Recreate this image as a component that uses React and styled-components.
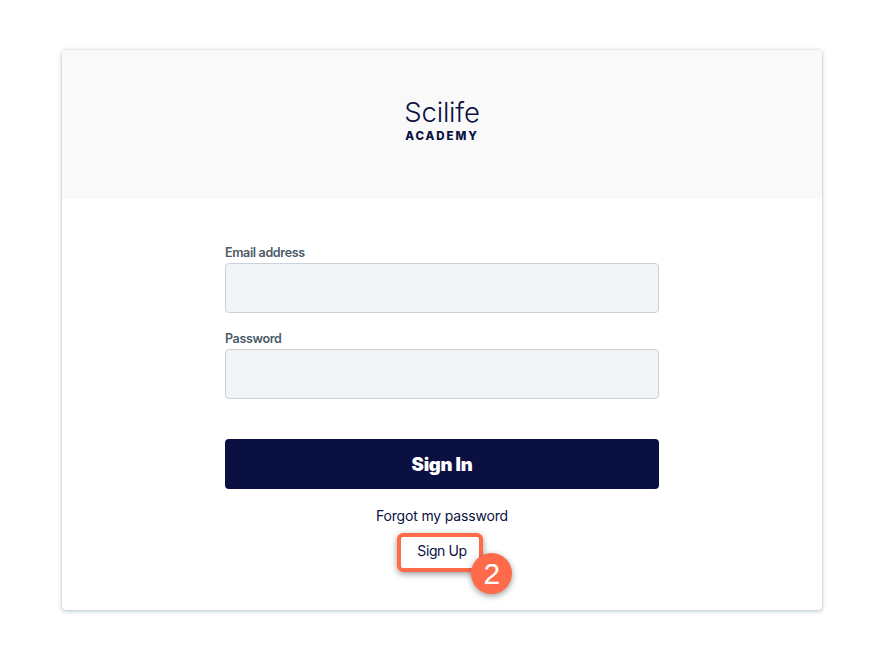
import React from "react";
import styled, { createGlobalStyle } from "styled-components";

const Global = createGlobalStyle`
  html, body { margin: 0; padding: 0; background: #fff; }
  body { font-family: "Inter", "Liberation Sans", sans-serif; }
`;

const Page = styled.div`
  width: 889px;
  height: 669px;
  padding: 50px 67px 0 62px;
  box-sizing: border-box;
`;

const Card = styled.main`
  height: 560px;
  background: #fff;
  border-radius: 4px;
  box-shadow: 0 1px 4px rgba(120, 150, 160, 0.6), 0 0 2px rgba(120, 150, 160, 0.15);
`;

const Header = styled.header`
  height: 149px;
  background: #f9f9f9;
  border-radius: 4px 4px 0 0;
  display: flex;
  flex-direction: column;
  align-items: center;
  padding-top: 47px;
  box-sizing: border-box;
  color: #0a1142;
`;

const LogoName = styled.div`
  font-size: 27.5px;
  line-height: 31px;
  font-weight: 300;
  letter-spacing: -0.2px;
`;

const LogoSub = styled.div`
  font-size: 11.5px;
  line-height: 14px;
  font-weight: 800;
  letter-spacing: 1.9px;
  margin-top: 1px;
`;

const Form = styled.form`
  width: 434px;
  margin: 0 auto;
  padding-top: 46px;
  display: flex;
  flex-direction: column;
`;

const Label = styled.label`
  font-size: 12.5px;
  line-height: 16px;
  font-weight: 600;
  color: #4b5a66;
  letter-spacing: -0.35px;
  margin-bottom: 2px;
`;

const Input = styled.input`
  height: 50px;
  box-sizing: border-box;
  background: #f3f4f6;
  border: 1px solid #ccd3d8;
  border-radius: 4px;
  margin-bottom: 18px;
  outline: none;
`;

const SignIn = styled.button`
  height: 50px;
  margin-top: 22px;
  background: #0a1142;
  color: #fff;
  border: 0;
  border-radius: 4px;
  font-family: inherit;
  font-size: 18.5px;
  font-weight: 900;
  letter-spacing: -0.3px;
`;

const Links = styled.div`
  display: flex;
  flex-direction: column;
  align-items: center;
  color: #0a1142;
  font-size: 14px;
  line-height: 18px;
  padding-top: 18px;
`;

const Forgot = styled.a`
  letter-spacing: -0.17px;
`;

const SignUp = styled.a`
  position: relative;
  margin-top: 17px;
  letter-spacing: -0.4px;
`;

const Highlight = styled.span`
  position: absolute;
  left: -20px;
  top: -9px;
  width: 86px;
  height: 39px;
  box-sizing: border-box;
  border: 4px solid #ff6b4a;
  border-radius: 6px;
  box-shadow: 0 2px 6px rgba(0, 0, 0, 0.4);
`;

const Badge = styled.span`
  position: absolute;
  left: 54px;
  top: 11px;
  width: 41px;
  height: 41px;
  border-radius: 50%;
  background: #ff6b4a;
  color: #fff;
  font-size: 30px;
  line-height: 41px;
  text-align: center;
  letter-spacing: 0;
  font-family: "Liberation Sans", sans-serif;
  box-shadow: 0 2px 6px rgba(0, 0, 0, 0.4);
`;

export default function App() {
  return (
    <>
      <Global />
      <Page>
        <Card>
          <Header>
            <LogoName>Scilife</LogoName>
            <LogoSub>ACADEMY</LogoSub>
          </Header>
          <Form onSubmit={(e) => e.preventDefault()}>
            <Label>Email address</Label>
            <Input type="email" />
            <Label>Password</Label>
            <Input type="password" />
            <SignIn>Sign In</SignIn>
            <Links>
              <Forgot>Forgot my password</Forgot>
              <SignUp>
                Sign Up
                <Highlight />
                <Badge>2</Badge>
              </SignUp>
            </Links>
          </Form>
        </Card>
      </Page>
    </>
  );
}
